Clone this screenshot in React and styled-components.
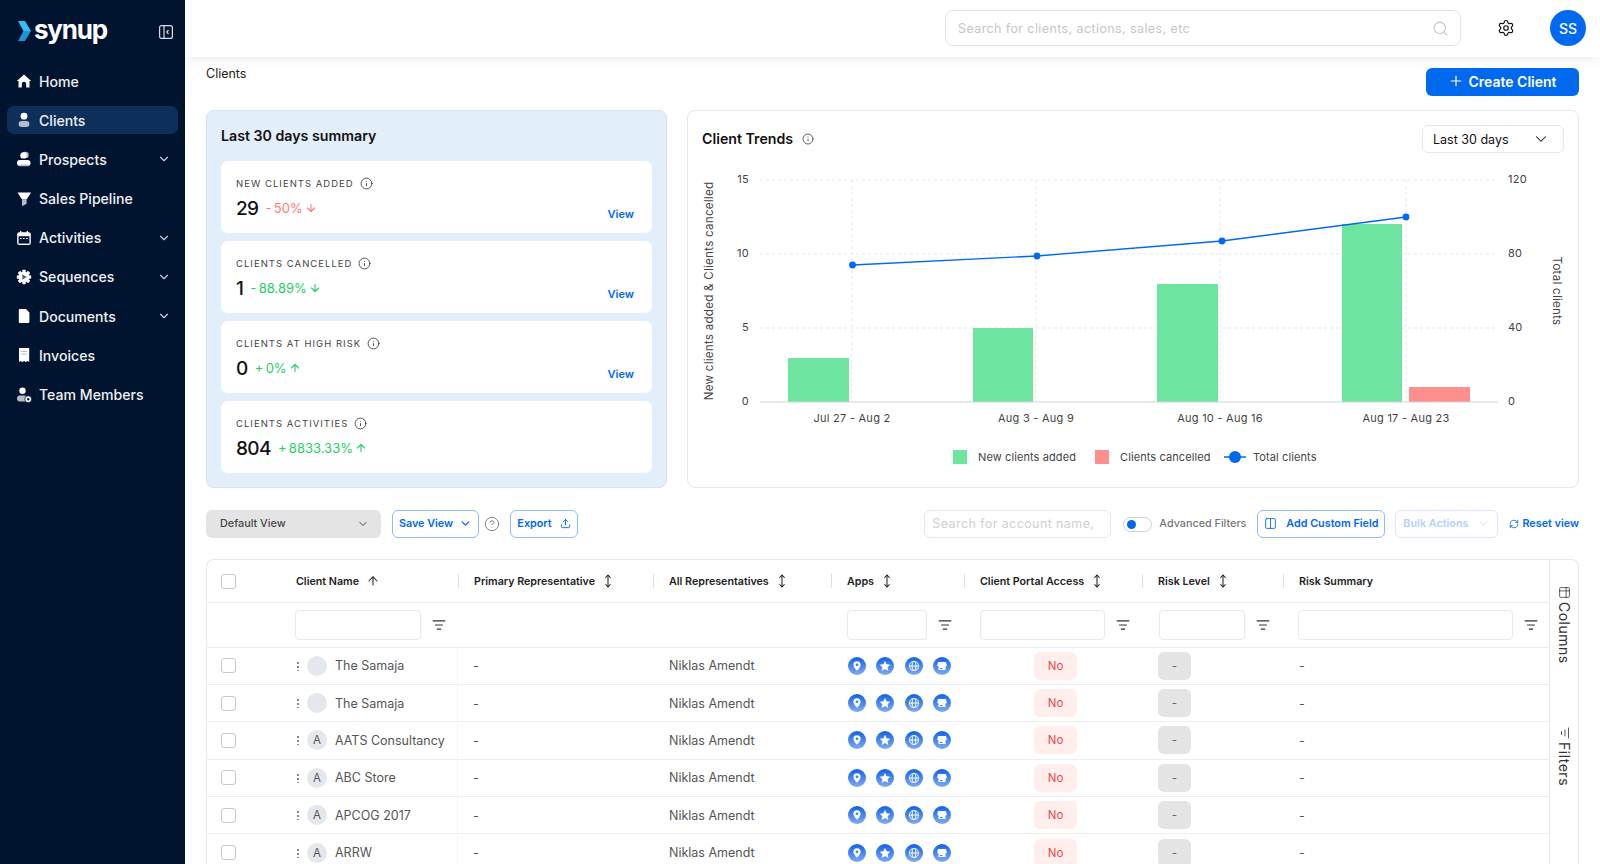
import React from 'react'
import styled, { createGlobalStyle } from 'styled-components'
import {
  ArrowDown,
  ArrowUp,
  ChevronDown,
  CircleHelp,
  Columns2,
  Info,
  ListFilter,
  MoveVertical,
  Plus,
  RefreshCw,
  Search,
  Settings,
  Table2,
  Upload,
} from 'lucide-react'

const NAVY = '#01142f'
const BLUE = '#0069ee'
const COLS = '74px 177px 195px 178px 133px 178px 141px 266px'

const GlobalStyle = createGlobalStyle`
  * { box-sizing: border-box; }
  html, body { margin: 0; padding: 0; height: 100%; }
  body { font-family: Inter, "Liberation Sans", sans-serif; color: #111; background: #fff; overflow: hidden; }
`

const Shell = styled.div`
  display: flex;
  height: 864px;
  overflow: hidden;
`

const Sidebar = styled.aside`
  width: 185px;
  flex: none;
  background: ${NAVY};
  color: #fff;
  position: relative;
  z-index: 3;
`

const LogoRow = styled.div`
  height: 61px;
  padding: 20px 12px 0 18px;
  display: flex;
  align-items: flex-start;
  justify-content: space-between;
`

const Logo = styled.div`
  display: flex;
  align-items: center;
  gap: 2px;
  height: 22px;
`

const LogoText = styled.span`
  font-size: 26px;
  font-weight: 700;
  letter-spacing: -1.2px;
  line-height: 22px;
  padding-bottom: 3px;
  color: #fff;
`

const CollapseBtn = styled.svg`
  margin-top: 5px;
  flex: none;
`

const NavList = styled.nav`
  display: flex;
  flex-direction: column;
  gap: 11.2px;
  padding: 6px 7px 0;
`

const NavItem = styled.div`
  height: 28px;
  border-radius: 7px;
  padding: 0 7px 0 9px;
  display: flex;
  align-items: center;
  gap: 7px;
  font-size: 14.1px;
  font-weight: 500;
  color: #eef1f5;
  background: ${p => (p.$active ? '#0e2f5a' : 'transparent')};
`

const NavLabel = styled.span`
  flex: 1;
`

const Main = styled.div`
  flex: 1;
  min-width: 0;
  display: flex;
  flex-direction: column;
`

const TopBar = styled.header`
  height: 57px;
  flex: none;
  padding: 10px 14px 0 0;
  display: flex;
  justify-content: flex-end;
  align-items: flex-start;
  background: #fff;
  box-shadow: 0 3px 10px rgba(0, 0, 0, 0.07);
  position: relative;
  z-index: 2;
`

const GlobalSearch = styled.div`
  width: 516px;
  height: 36px;
  border: 1px solid #e3e3e3;
  border-radius: 8px;
  display: flex;
  align-items: center;
  padding: 0 11px 0 10px;
  color: #c4c4c4;
`

const GlobalInput = styled.input`
  flex: 1;
  border: 0;
  outline: 0;
  font: 400 12.5px Inter, sans-serif;
  letter-spacing: 0.4px;
  &::placeholder { color: #c6c6c6; }
`

const GearWrap = styled.div`
  width: 36px;
  height: 36px;
  margin: 0 26px 0 27px;
  display: flex;
  align-items: center;
  justify-content: center;
  color: #111;
`

const Avatar = styled.div`
  width: 36px;
  height: 36px;
  border-radius: 50%;
  background: ${BLUE};
  color: #fff;
  font-size: 14px;
  font-weight: 500;
  display: flex;
  align-items: center;
  justify-content: center;
`

const Content = styled.main`
  flex: 1;
  padding: 11px 21px 0;
  overflow: hidden;
`

const CrumbRow = styled.div`
  display: flex;
  justify-content: space-between;
  align-items: flex-start;
  height: 28px;
`

const Crumb = styled.div`
  font-size: 12.5px;
  line-height: 12px;
  color: #222;
`

const CreateButton = styled.button`
  width: 153px;
  height: 28px;
  border: 0;
  border-radius: 6px;
  padding: 0 0 2px;
  background: ${BLUE};
  color: #fff;
  font: 600 14px Inter, sans-serif;
  display: flex;
  align-items: center;
  justify-content: center;
  gap: 4px;
`

const Panels = styled.section`
  display: grid;
  grid-template-columns: 461px 892px;
  gap: 20px;
  height: 378px;
  margin-top: 14px;
`

const SummaryPanel = styled.div`
  background: #e3eefb;
  border: 1px solid #d6e1ef;
  border-radius: 8px;
  padding: 0 14px;
`

const SummaryTitle = styled.h2`
  margin: 0;
  height: 50px;
  padding-bottom: 2px;
  display: flex;
  align-items: center;
  font-size: 14.2px;
  font-weight: 600;
`

const StatList = styled.div`
  display: flex;
  flex-direction: column;
  gap: 8px;
`

const StatCard = styled.div`
  height: 72px;
  background: #fff;
  border-radius: 7px;
  padding: 15px 18px 0 15px;
`

const StatLabel = styled.div`
  display: flex;
  align-items: center;
  gap: 6px;
  height: 14px;
  font-size: 9.5px;
  letter-spacing: 1.02px;
  color: #444;
  text-transform: uppercase;
`

const StatRow = styled.div`
  display: flex;
  align-items: center;
  margin-top: 4px;
  height: 28px;
`

const StatValue = styled.span`
  font-size: 19px;
  font-weight: 500;
  letter-spacing: -0.6px;
  margin-right: 7px;
`

const Delta = styled.span`
  display: flex;
  align-items: center;
  gap: 2px;
  font-size: 13px;
  color: ${p => p.$color};
`

const ViewLink = styled.a`
  margin-left: auto;
  align-self: flex-end;
  font-size: 11px;
  font-weight: 600;
  color: ${BLUE};
  transform: translateY(-1px);
`

const TrendCard = styled.div`
  border: 1px solid #e5e7ea;
  border-radius: 8px;
  overflow: hidden;
`

const TrendHead = styled.div`
  height: 42px;
  padding: 14px 14px 0 14px;
  display: flex;
  align-items: center;
  justify-content: space-between;
`

const TrendTitle = styled.h2`
  margin: 0;
  padding-bottom: 1px;
  font-size: 14.2px;
  font-weight: 600;
  display: flex;
  align-items: center;
  gap: 9px;
`

const RangeSelect = styled.div`
  width: 142px;
  height: 28px;
  border: 1px solid #e5e7ea;
  border-radius: 6px;
  padding: 0 13px 0 10px;
  font-size: 12.5px;
  display: flex;
  align-items: center;
  justify-content: space-between;
`

const ChartSvg = styled.svg`
  display: block;
  font-family: Inter, sans-serif;
  font-size: 11px;
  letter-spacing: 0.25px;
  fill: #444;
`

const LegendText = styled.text`
  letter-spacing: 0.1px;
`

const Toolbar = styled.div`
  margin-top: 22px;
  height: 28px;
  display: flex;
  align-items: center;
`

const ViewSelect = styled.div`
  width: 175px;
  height: 28px;
  border-radius: 6px;
  background: #e4e4e4;
  color: #444;
  font-size: 10.8px;
  font-weight: 500;
  padding: 0 12px 1px 14px;
  display: flex;
  align-items: center;
  justify-content: space-between;
`

const OutlineButton = styled.button`
  height: 28px;
  width: ${p => p.$w}px;
  margin-left: ${p => p.$ml || 0}px;
  padding: 0 0 1px;
  background: #fff;
  border: 1px solid ${p => (p.$faded ? '#dbe8fb' : '#8fbcf7')};
  border-radius: 6px;
  color: ${p => (p.$faded ? '#b3d1f9' : BLUE)};
  font: 600 10.8px Inter, sans-serif;
  display: flex;
  align-items: center;
  justify-content: center;
  gap: ${p => p.$gap || 8}px;
`

const HelpWrap = styled.span`
  margin-left: 5px;
  display: flex;
  color: #777;
`

const ToolSpacer = styled.div`
  flex: 1;
`

const AccountSearch = styled.input`
  width: 187px;
  height: 28px;
  border: 1px solid #e5e7ea;
  border-radius: 6px;
  padding: 0 7px 1px;
  outline: 0;
  font: 400 12.5px Inter, sans-serif;
  letter-spacing: 0.4px;
  &::placeholder { color: #cfcfcf; }
`

const Toggle = styled.span`
  width: 29px;
  height: 15px;
  margin-left: 12px;
  border: 1px solid #cfcfcf;
  border-radius: 8px;
  padding: 2px 3px;
  display: flex;
  &::before {
    content: '';
    width: 9px;
    height: 9px;
    border-radius: 50%;
    background: ${BLUE};
  }
`

const ToggleLabel = styled.span`
  margin-left: 7px;
  padding-bottom: 1px;
  font-size: 10.8px;
  font-weight: 500;
  color: #777;
`

const ResetLink = styled.span`
  margin-left: 11px;
  padding-bottom: 1px;
  display: flex;
  align-items: center;
  gap: 3px;
  font-size: 10.8px;
  font-weight: 600;
  color: ${BLUE};
`

const TableFrame = styled.div`
  margin-top: 21px;
  height: 340px;
  border: 1px solid #e5e7ea;
  border-bottom: 0;
  border-radius: 8px 8px 0 0;
  display: flex;
  overflow: hidden;
`

const TableBody = styled.div`
  width: 1342px;
  flex: none;
`

const HeadRow = styled.div`
  display: grid;
  grid-template-columns: ${COLS};
  height: 43px;
  border-bottom: 1px solid #eceef0;
`

const HeadCell = styled.div`
  display: flex;
  align-items: center;
  font-size: 10.7px;
  font-weight: 600;
  color: #222;
  gap: ${p => p.$gap || 6}px;
  padding-left: ${p => p.$pl || 0}px;
`

const Sep = styled.span`
  width: 1px;
  height: 14px;
  background: #d9e0e8;
  margin-right: 9px;
`

const CheckCell = styled.div`
  display: flex;
  align-items: center;
  padding-left: 14px;
`

const Check = styled.span`
  width: 15px;
  height: 15px;
  border: 1px solid #c8c8c8;
  border-radius: 3px;
  background: #fff;
`

const FilterRow = styled.div`
  display: grid;
  grid-template-columns: ${COLS};
  height: 44.5px;
  border-bottom: 1px solid #eceef0;
`

const FilterCell = styled.div`
  display: flex;
  align-items: center;
  padding-left: ${p => p.$pl || 16}px;
  gap: 11px;
  color: #333;
`

const FilterInput = styled.div`
  width: ${p => p.$w}px;
  height: 30px;
  border: 1px solid #e8e9eb;
  border-radius: 4px;
`

const DataRow = styled.div`
  display: grid;
  grid-template-columns: ${COLS};
  height: 37.4px;
  border-bottom: 1px solid #eceef0;
  font-size: 12.5px;
  color: #555;
`

const Cell = styled.div`
  display: flex;
  align-items: center;
  padding-left: ${p => p.$pl ?? 16}px;
  gap: ${p => p.$gap || 0}px;
  border-right: ${p => (p.$pinned ? '1px solid #f6f6f6' : '0')};
`

const Dots = styled.span`
  width: 2px;
  height: 10px;
  margin-right: 8px;
  background: radial-gradient(circle, #888 1px, transparent 1.1px) 0 0 / 2px 4px;
`

const RowAvatar = styled.span`
  width: 20px;
  height: 20px;
  margin-right: 8px;
  border-radius: 50%;
  background: #e4e7ec;
  color: #555;
  font-size: 11.5px;
  display: flex;
  align-items: center;
  justify-content: center;
`

const Badge = styled.span`
  height: 28px;
  width: ${p => p.$w}px;
  border-radius: 6px;
  background: ${p => p.$bg};
  color: ${p => p.$color};
  font-size: 11.5px;
  display: flex;
  align-items: center;
  justify-content: center;
`

const Rail = styled.div`
  width: 30px;
  flex: none;
  border-left: 1px solid #e5e7ea;
  display: flex;
  flex-direction: column;
  align-items: center;
  padding-top: 26px;
  gap: 63px;
`

const RailItem = styled.div`
  writing-mode: vertical-rl;
  display: flex;
  align-items: center;
  gap: 3px;
  font-size: 14px;
  color: #333;
  letter-spacing: 0.5px;
`

const RailIcon = styled.span`
  display: flex;
  transform: rotate(${p => p.$deg || 0}deg);
`

function Glyph({ children }) {
  return (
    <svg width="16" height="16" viewBox="0 0 16 16" style={{ flex: 'none' }}>
      {children}
    </svg>
  )
}

const MUTED = '#b4bdc9'

const navIcons = {
  home: (
    <Glyph>
      <path d="M8 1.5 15.2 8h-1.7v6.5H10.2V11a2.2 2.2 0 0 0-4.4 0v3.5H2.5V8H.8z" fill="#fff" />
    </Glyph>
  ),
  clients: (
    <Glyph>
      <circle cx="8" cy="4.2" r="3.4" fill="#fff" />
      <rect x="2.6" y="9" width="10.8" height="6" rx="3" fill={MUTED} />
    </Glyph>
  ),
  prospects: (
    <Glyph>
      <circle cx="9.5" cy="4" r="3.2" fill={MUTED} />
      <circle cx="7.5" cy="4.4" r="3.2" fill="#fff" />
      <rect x="1" y="9" width="13.5" height="5.8" rx="2.9" fill="#fff" />
      <rect x="3" y="13.6" width="10" height="1.6" rx=".8" fill={MUTED} />
    </Glyph>
  ),
  pipeline: (
    <Glyph>
      <path d="M1.5 1.5h13.6L10.6 8.5H6z" fill="#fff" />
      <path d="M6 8.5h4.6v4.3L6 15.2z" fill={MUTED} />
    </Glyph>
  ),
  activities: (
    <Glyph>
      <rect x="1.2" y="2.3" width="13.6" height="12.7" rx="2" fill="#fff" />
      <rect x="2.6" y="6.2" width="10.8" height="7.4" fill={NAVY} />
      <rect x="4" y="1" width="1.4" height="2.5" fill="#fff" />
      <rect x="10.6" y="1" width="1.4" height="2.5" fill="#fff" />
      <path d="M4 8.5h1.6M7 8.5h1.6M10 8.5h1.6" stroke="#fff" strokeWidth="1.2" />
    </Glyph>
  ),
  sequences: (
    <Glyph>
      {[0, 45, 90, 135].map(deg => (
        <rect key={deg} x="6.3" y=".8" width="3.4" height="14.4" rx=".8" fill="#fff" transform={`rotate(${deg} 8 8)`} />
      ))}
      <circle cx="8" cy="8" r="5.3" fill="#fff" />
      <path d="M6.3 5.2 10.8 8l-4.5 2.8z" fill="#55647a" />
    </Glyph>
  ),
  documents: (
    <Glyph>
      <path d="M4 1h6l3.4 3.6v9.2a1.2 1.2 0 0 1-1.2 1.2H4a1.2 1.2 0 0 1-1.2-1.2V2.2A1.2 1.2 0 0 1 4 1z" fill="#fff" />
    </Glyph>
  ),
  invoices: (
    <Glyph>
      <path d="M3 1h10.2v14l-1.7-1-1.7 1-1.7-1-1.7 1-1.7-1L3 15z" fill="#fff" />
      <path d="M5 4.5h6M5 7h6" stroke={MUTED} strokeWidth="1" />
    </Glyph>
  ),
  team: (
    <Glyph>
      <circle cx="6.5" cy="3.8" r="3.2" fill="#fff" />
      <rect x="1" y="8.6" width="10.5" height="6" rx="3" fill={MUTED} />
      <circle cx="12.2" cy="12.2" r="3.4" fill="#fff" stroke={NAVY} strokeWidth=".8" />
      <circle cx="12.2" cy="12.2" r="1.2" fill={NAVY} />
    </Glyph>
  ),
}

const navItems = [
  { label: 'Home', icon: 'home' },
  { label: 'Clients', icon: 'clients', active: true },
  { label: 'Prospects', icon: 'prospects', caret: true },
  { label: 'Sales Pipeline', icon: 'pipeline' },
  { label: 'Activities', icon: 'activities', caret: true },
  { label: 'Sequences', icon: 'sequences', caret: true },
  { label: 'Documents', icon: 'documents', caret: true },
  { label: 'Invoices', icon: 'invoices' },
  { label: 'Team Members', icon: 'team' },
]

const stats = [
  { label: 'New clients added', value: '29', delta: '-\u200950%', color: '#ff7b78', down: true, view: true },
  { label: 'Clients cancelled', value: '1', delta: '-\u200988.89%', color: '#1fd068', down: true, view: true },
  { label: 'Clients at high risk', value: '0', delta: '+\u20090%', color: '#1fd068', view: true },
  { label: 'Clients activities', value: '804', delta: '+\u20098833.33%', color: '#1fd068' },
]

const rows = [
  { name: 'The Samaja' },
  { name: 'The Samaja' },
  { name: 'AATS Consultancy', initial: 'A' },
  { name: 'ABC Store', initial: 'A' },
  { name: 'APCOG 2017', initial: 'A' },
  { name: 'ARRW', initial: 'A' },
]

function AppBadge({ id, children }) {
  return (
    <svg width="18" height="18" viewBox="0 0 18 18">
      <defs>
        <linearGradient id={id} x1="0" y1="0" x2="0" y2="1">
          <stop offset="0" stopColor="#0f62e6" />
          <stop offset="1" stopColor="#7fabf2" />
        </linearGradient>
      </defs>
      <circle cx="9" cy="9" r="9" fill={`url(#${id})`} />
      {children}
    </svg>
  )
}

function AppIcons({ row }) {
  return (
    <>
      <AppBadge id={`pin${row}`}>
        <path d="M9 4.2a3.6 3.6 0 0 1 3.6 3.6C12.6 10.2 9 13.8 9 13.8S5.4 10.2 5.4 7.8A3.6 3.6 0 0 1 9 4.2z" fill="#fff" />
        <circle cx="9" cy="7.8" r="1.4" fill="#3f80ea" />
      </AppBadge>
      <AppBadge id={`star${row}`}>
        <path d="m9 3.8 1.6 3.4 3.7.5-2.7 2.5.7 3.7L9 12.1l-3.3 1.8.7-3.7-2.7-2.5 3.7-.5z" fill="#fff" />
      </AppBadge>
      <AppBadge id={`globe${row}`}>
        <g fill="none" stroke="#fff" strokeWidth="1">
          <circle cx="9" cy="9" r="4.6" />
          <ellipse cx="9" cy="9" rx="2" ry="4.6" />
          <path d="M4.4 9h9.2" />
        </g>
      </AppBadge>
      <AppBadge id={`store${row}`}>
        <path d="M5 5h8l.8 3.2a1.5 1.5 0 0 1-1.3 1.3V13h-7V9.5a1.5 1.5 0 0 1-1.3-1.3z" fill="#fff" />
        <path d="M7 11.5h2.5" stroke="#3f80ea" strokeWidth="1.2" />
      </AppBadge>
    </>
  )
}

const grid = { stroke: '#e6e7ea', strokeWidth: 1, strokeDasharray: '3 3' }

function TrendChart() {
  const yTicks = [
    { y: 180, left: '15', right: '120' },
    { y: 254, left: '10', right: '80' },
    { y: 328, left: '5', right: '40' },
    { y: 402, left: '0', right: '0' },
  ]
  const weeks = [
    { x: 852, label: 'Jul 27 - Aug 2' },
    { x: 1036, label: 'Aug 3 - Aug 9' },
    { x: 1220, label: 'Aug 10 - Aug 16' },
    { x: 1406, label: 'Aug 17 - Aug 23' },
  ]
  const bars = [
    { x: 788, w: 61, top: 358, fill: '#6fe3a0' },
    { x: 973, w: 60, top: 328, fill: '#6fe3a0' },
    { x: 1157, w: 61, top: 284, fill: '#6fe3a0' },
    { x: 1342, w: 60, top: 224, fill: '#6fe3a0' },
    { x: 1409, w: 61, top: 387, fill: '#ff8f8c' },
  ]
  const points = [
    [852.5, 265],
    [1037, 256],
    [1222, 241],
    [1406, 217],
  ]

  return (
    <ChartSvg width="890" height="334" viewBox="688 153 890 334">
      {yTicks.slice(0, 3).map(t => (
        <line key={t.y} x1="760" x2="1498" y1={t.y} y2={t.y} {...grid} />
      ))}
      {weeks.map(w => (
        <line key={w.x} x1={w.x} x2={w.x} y1="180" y2="402" {...grid} />
      ))}
      {bars.map(b => (
        <rect key={b.x} x={b.x} y={b.top} width={b.w} height={402 - b.top} fill={b.fill} />
      ))}
      <line x1="760" x2="1498" y1="402" y2="402" stroke="#d0d2d6" />
      <polyline points={points.map(p => p.join(',')).join(' ')} fill="none" stroke={BLUE} strokeWidth="1.3" />
      {points.map(p => (
        <circle key={p[0]} cx={p[0]} cy={p[1]} r="3.4" fill={BLUE} />
      ))}
      {yTicks.map(t => (
        <text key={t.y} x="749" y={t.y + 3} textAnchor="end">{t.left}</text>
      ))}
      {yTicks.map(t => (
        <text key={t.y} x="1508" y={t.y + 3}>{t.right}</text>
      ))}
      {weeks.map(w => (
        <text key={w.x} x={w.x} y="422" textAnchor="middle">{w.label}</text>
      ))}
      <text x="0" y="0" textAnchor="middle" fontSize="11.6" transform="translate(713 291) rotate(-90)">New clients added &amp; Clients cancelled</text>
      <text x="0" y="0" textAnchor="middle" fontSize="11.6" transform="translate(1553 291) rotate(90)">Total clients</text>

      <rect x="953" y="450" width="14" height="14" fill="#6fe3a0" />
      <LegendText x="978" y="461">New clients added</LegendText>
      <rect x="1095" y="450" width="14" height="14" fill="#ff8f8c" />
      <LegendText x="1120" y="461">Clients cancelled</LegendText>
      <line x1="1224" x2="1246" y1="457" y2="457" stroke={BLUE} strokeWidth="1.5" />
      <circle cx="1235" cy="457" r="6" fill={BLUE} />
      <LegendText x="1253" y="461">Total clients</LegendText>
    </ChartSvg>
  )
}

function SortIcon() {
  return <MoveVertical size={14} strokeWidth={1.8} />
}

function App() {
  return (
    <Shell>
      <GlobalStyle />
      <Sidebar>
        <LogoRow>
          <Logo>
            <svg width="14" height="22" viewBox="0 0 14 22">
              <path d="M0 1h7l6 10H5.5z" fill="#35c0f4" />
              <path d="M5.5 11H13L7 21H0z" fill="#1f93d8" />
            </svg>
            <LogoText>synup</LogoText>
          </Logo>
          <CollapseBtn width="14" height="14" viewBox="0 0 14 14" fill="none" stroke="#d9dde3" strokeWidth="1.2">
            <rect x=".6" y=".6" width="12.8" height="12.8" rx="2" />
            <path d="M5 .6v12.8M9.5 5 7.8 7l1.7 2" />
          </CollapseBtn>
        </LogoRow>
        <NavList>
          {navItems.map(item => (
            <NavItem key={item.label} $active={item.active}>
              {navIcons[item.icon]}
              <NavLabel>{item.label}</NavLabel>
              {item.caret && <ChevronDown size={14} color="#c9ced6" />}
            </NavItem>
          ))}
        </NavList>
      </Sidebar>

      <Main>
        <TopBar>
          <GlobalSearch>
            <GlobalInput placeholder="Search for clients, actions, sales, etc" readOnly />
            <Search size={17} strokeWidth={1.5} />
          </GlobalSearch>
          <GearWrap>
            <Settings size={18} strokeWidth={1.6} />
          </GearWrap>
          <Avatar>SS</Avatar>
        </TopBar>

        <Content>
          <CrumbRow>
            <Crumb>Clients</Crumb>
            <CreateButton>
              <Plus size={16} strokeWidth={1.8} />
              Create Client
            </CreateButton>
          </CrumbRow>

          <Panels>
            <SummaryPanel>
              <SummaryTitle>Last 30 days summary</SummaryTitle>
              <StatList>
                {stats.map(s => (
                  <StatCard key={s.label}>
                    <StatLabel>
                      {s.label}
                      <Info size={13} strokeWidth={1.4} color="#222" />
                    </StatLabel>
                    <StatRow>
                      <StatValue>{s.value}</StatValue>
                      <Delta $color={s.color}>
                        {s.delta}
                        {s.down ? <ArrowDown size={12} strokeWidth={2.2} /> : <ArrowUp size={12} strokeWidth={2.2} />}
                      </Delta>
                      {s.view && <ViewLink>View</ViewLink>}
                    </StatRow>
                  </StatCard>
                ))}
              </StatList>
            </SummaryPanel>

            <TrendCard>
              <TrendHead>
                <TrendTitle>
                  Client Trends
                  <Info size={12} strokeWidth={1.4} color="#222" />
                </TrendTitle>
                <RangeSelect>
                  Last 30 days
                  <ChevronDown size={18} strokeWidth={1.4} />
                </RangeSelect>
              </TrendHead>
              <TrendChart />
            </TrendCard>
          </Panels>

          <Toolbar>
            <ViewSelect>
              Default View
              <ChevronDown size={12} />
            </ViewSelect>
            <OutlineButton $w={87} $ml={11} $gap={6}>
              Save View
              <ChevronDown size={13} strokeWidth={2.4} />
            </OutlineButton>
            <HelpWrap>
              <CircleHelp size={16} strokeWidth={1.4} />
            </HelpWrap>
            <OutlineButton $w={68} $ml={10}>
              Export
              <Upload size={11} />
            </OutlineButton>
            <ToolSpacer />
            <AccountSearch placeholder="Search for account name," readOnly />
            <Toggle />
            <ToggleLabel>Advanced Filters</ToggleLabel>
            <OutlineButton $w={128} $ml={11} $gap={9}>
              <Columns2 size={13} strokeWidth={1.6} />
              Add Custom Field
            </OutlineButton>
            <OutlineButton $w={103} $ml={10} $faded $gap={9}>
              Bulk Actions
              <ChevronDown size={13} strokeWidth={1.4} />
            </OutlineButton>
            <ResetLink>
              <RefreshCw size={10} strokeWidth={2} />
              Reset view
            </ResetLink>
          </Toolbar>

          <TableFrame>
            <TableBody>
              <HeadRow>
                <CheckCell><Check /></CheckCell>
                <HeadCell $pl={15} $gap={7}>Client Name <ArrowUp size={14} strokeWidth={1.8} /></HeadCell>
                <HeadCell><Sep />Primary Representative <SortIcon /></HeadCell>
                <HeadCell><Sep />All Representatives <SortIcon /></HeadCell>
                <HeadCell><Sep />Apps <SortIcon /></HeadCell>
                <HeadCell><Sep />Client Portal Access <SortIcon /></HeadCell>
                <HeadCell><Sep />Risk Level <SortIcon /></HeadCell>
                <HeadCell><Sep />Risk Summary</HeadCell>
              </HeadRow>
              <FilterRow>
                <div />
                <FilterCell $pl={14}>
                  <FilterInput $w={126} />
                  <ListFilter size={14} />
                </FilterCell>
                <div />
                <div />
                <FilterCell>
                  <FilterInput $w={80} />
                  <ListFilter size={14} />
                </FilterCell>
                <FilterCell>
                  <FilterInput $w={125} />
                  <ListFilter size={14} />
                </FilterCell>
                <FilterCell $pl={17}>
                  <FilterInput $w={86} />
                  <ListFilter size={14} />
                </FilterCell>
                <FilterCell $pl={15}>
                  <FilterInput $w={215} />
                  <ListFilter size={14} />
                </FilterCell>
              </FilterRow>
              {rows.map((row, i) => (
                <DataRow key={i}>
                  <CheckCell><Check /></CheckCell>
                  <Cell $pl={16} $pinned>
                    <Dots />
                    <RowAvatar>{row.initial}</RowAvatar>
                    {row.name}
                  </Cell>
                  <Cell $pl={15}>-</Cell>
                  <Cell>Niklas Amendt</Cell>
                  <Cell $pl={17} $gap={10.3}><AppIcons row={i} /></Cell>
                  <Cell $pl={70}>
                    <Badge $w={43} $bg="#ffeeec" $color="#e5484d">No</Badge>
                  </Cell>
                  <Cell $pl={16}>
                    <Badge $w={33} $bg="#e4e4e4" $color="#666">-</Badge>
                  </Cell>
                  <Cell>-</Cell>
                </DataRow>
              ))}
            </TableBody>
            <Rail>
              <RailItem>
                <RailIcon $deg={90}><Table2 size={13} strokeWidth={1.4} /></RailIcon>
                Columns
              </RailItem>
              <RailItem>
                <RailIcon $deg={90}><ListFilter size={12} strokeWidth={1.6} /></RailIcon>
                Filters
              </RailItem>
            </Rail>
          </TableFrame>
        </Content>
      </Main>
    </Shell>
  )
}

export default App
